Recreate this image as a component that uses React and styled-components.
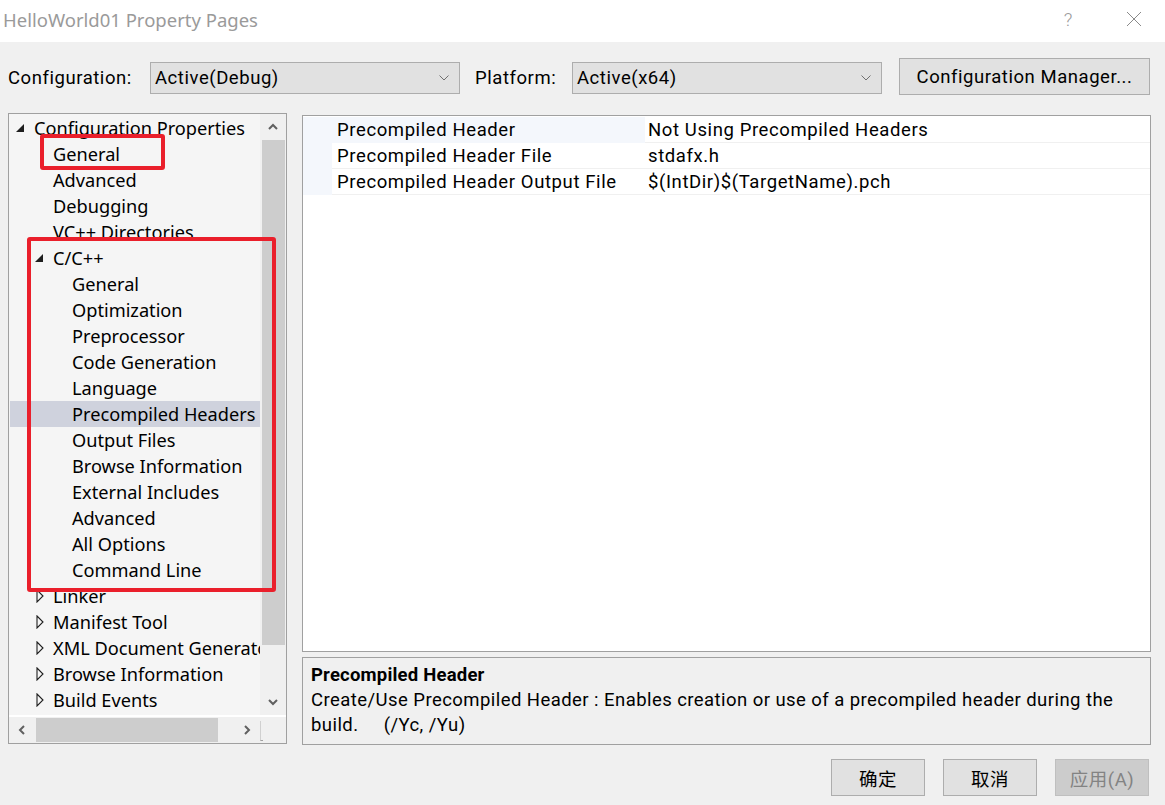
import React from "react";
import styled, { createGlobalStyle } from "styled-components";

const Global = createGlobalStyle`
  html, body { margin: 0; padding: 0; background: #f0f0f0; }
  body { font-family: "Noto Sans", "Noto Sans CJK SC", sans-serif; color: #000; }
  * { box-sizing: border-box; }
`;

const UI = `"Roboto", "Noto Sans CJK SC", sans-serif`;
const TREE = `"Noto Sans", "Noto Sans CJK SC", sans-serif`;

const Window = styled.div`
  width: 1165px;
  height: 805px;
  display: flex;
  flex-direction: column;
  background: #f0f0f0;
  overflow: hidden;
`;

const TitleBar = styled.div`
  height: 42px;
  background: #fff;
  display: flex;
  align-items: center;
  padding-left: 3px;
  flex-shrink: 0;
`;

const Title = styled.div`
  flex: 1;
  font-family: ${TREE};
  font-size: 18.5px;
  color: #9a9a9a;
  padding-bottom: 4px;
`;

const TitleBtn = styled.div`
  width: ${(p) => p.$w}px;
  height: 42px;
  display: flex;
  align-items: center;
  justify-content: center;
  color: #9a9a9a;
  font-family: ${UI};
  font-size: 19px;
  font-weight: 300;
  padding-bottom: 4px;
`;

const Toolbar = styled.div`
  height: 71px;
  display: flex;
  align-items: center;
  padding: 0 15px 0 8px;
  flex-shrink: 0;
`;

const Label = styled.span`
  font-family: ${UI};
  font-size: 18.5px;
  letter-spacing: 0.55px;
  width: ${(p) => p.$w}px;
  flex-shrink: 0;
`;

const Combo = styled.div`
  width: 310px;
  height: 32px;
  background: #e1e1e1;
  border: 1px solid #adadad;
  display: flex;
  align-items: center;
  padding-left: 4px;
  font-family: ${UI};
  font-size: 18.5px;
  letter-spacing: 0.55px;
  margin-right: ${(p) => p.$mr}px;
  flex-shrink: 0;
`;

const ComboText = styled.span`
  flex: 1;
`;

const ComboArrow = styled.span`
  width: 24px;
  display: flex;
  justify-content: center;
  padding-right: 6px;
`;

const Button = styled.button`
  width: ${(p) => p.$w}px;
  height: ${(p) => p.$h}px;
  background: ${(p) => (p.disabled ? "#cccccc" : "#e1e1e1")};
  border: 1px solid ${(p) => (p.disabled ? "#bfbfbf" : "#adadad")};
  color: ${(p) => (p.disabled ? "#838383" : "#000")};
  font-family: ${UI};
  font-size: 18.5px;
  letter-spacing: 0.55px;
  padding: 0;
  margin: 0;
  flex-shrink: 0;
  display: flex;
  align-items: center;
  justify-content: center;
  margin-top: ${(p) => p.$mt || 0}px;
`;

const Main = styled.div`
  height: 632px;
  display: flex;
  padding-left: 8px;
  gap: 15px;
  flex-shrink: 0;
`;

const TreePanel = styled.div`
  position: relative;
  width: 279px;
  height: 631px;
  border: 1px solid #a0a0a0;
  background: #f5f5f5;
  display: grid;
  grid-template-columns: 251px 26px;
  grid-template-rows: 601px 28px;
`;

const TreeContent = styled.div`
  overflow: hidden;
  padding-top: 1px;
  padding-left: 1px;
`;

const TreeRow = styled.div`
  height: 26px;
  display: flex;
  align-items: center;
  white-space: nowrap;
  font-family: ${TREE};
  font-size: 18.2px;
  padding-left: ${(p) => 5 + p.$level * 19}px;
  background: ${(p) => (p.$selected ? "#cfd2dd" : "transparent")};
`;

const Toggle = styled.span`
  width: 19px;
  flex-shrink: 0;
  display: flex;
  align-items: center;
  justify-content: flex-start;
  padding-left: ${(p) => (p.$open ? 0 : 2)}px;
`;

const VScroll = styled.div`
  background: #f0f0f0;
  display: flex;
  flex-direction: column;
`;

const ScrollBtn = styled.div`
  height: ${(p) => p.$h}px;
  width: ${(p) => p.$w || 26}px;
  display: flex;
  align-items: center;
  justify-content: center;
  flex-shrink: 0;
`;

const VThumb = styled.div`
  margin: 0 1px 0 2px;
  height: 505px;
  background: #cdcdcd;
`;

const VSpacer = styled.div`
  flex: 1;
`;

const HScroll = styled.div`
  background: #f0f0f0;
  display: flex;
  align-items: stretch;
  border-top: 2px solid #fff;
`;

const HThumb = styled.div`
  width: 182px;
  margin: 1px 0 1px 1px;
  background: #cdcdcd;
`;

const Corner = styled.div`
  background: #f0f0f0;
  border-top: 2px solid #fff;
  position: relative;
`;

const Grip = styled.div`
  position: absolute;
  left: 0;
  top: 4px;
  width: 3px;
  height: 20px;
  border-left: 1px solid #d0d0d0;
  border-bottom: 1px solid #a0a0a0;
`;

const Highlight = styled.div`
  position: absolute;
  left: ${(p) => p.$x}px;
  top: ${(p) => p.$y}px;
  width: ${(p) => p.$w}px;
  height: ${(p) => p.$h}px;
  border: 4px solid #ea1f2b;
  border-radius: 3px;
  pointer-events: none;
`;

const RightCol = styled.div`
  width: 849px;
  display: flex;
  flex-direction: column;
  gap: 5px;
  padding-top: 2px;
`;

const Grid = styled.div`
  height: 537px;
  border: 1px solid #a0a0a0;
  background: #fff;
  padding-top: 1px;
  display: flex;
  flex-direction: column;
`;

const GridRow = styled.div`
  height: 26px;
  display: grid;
  grid-template-columns: 29px 313px 1fr;
  font-family: ${UI};
  font-size: 18.5px;
  letter-spacing: 0.6px;
`;

const Margin = styled.div`
  background: #f4f7fc;
`;

const Cell = styled.div`
  display: flex;
  align-items: center;
  padding-left: ${(p) => p.$pl}px;
  padding-top: 1px;
  background: ${(p) => (p.$sel ? "#f4f7fc" : "#fff")};
  border-bottom: 1px solid ${(p) => (p.$sel ? "#f4f7fc" : "#f0f0f0")};
  white-space: nowrap;
`;

const Desc = styled.div`
  height: 88px;
  border: 1px solid #a0a0a0;
  background: #f0f0f0;
  padding: 4px 8px;
  font-family: ${UI};
  font-size: 18.5px;
  letter-spacing: 0.44px;
  line-height: 24.5px;
  white-space: pre-wrap;
`;

const DescTitle = styled.div`
  font-weight: 700;
  letter-spacing: 0.2px;
  line-height: 26px;
`;

const Footer = styled.div`
  flex: 1;
  display: flex;
  justify-content: flex-end;
  align-items: flex-start;
  padding: 14px 16px 0 0;
  gap: 18px;
`;

const Chevron = ({ dir = "down", size = 12, color = "#606060", w = 2 }) => {
  const d = {
    down: "M2 4 L6 8 L10 4",
    up: "M2 8 L6 4 L10 8",
    left: "M8 2 L4 6 L8 10",
    right: "M4 2 L8 6 L4 10",
  }[dir];
  return (
    <svg width={size} height={size} viewBox="0 0 12 12">
      <path d={d} fill="none" stroke={color} strokeWidth={w} />
    </svg>
  );
};

const ComboChevron = () => (
  <svg width="10" height="6" viewBox="0 0 10 6">
    <path d="M0.5 0.5 L5 5 L9.5 0.5" fill="none" stroke="#707070" strokeWidth="1" />
  </svg>
);

const OpenTri = () => (
  <svg width="10" height="10" viewBox="0 0 10 10">
    <path d="M9 1 L9 9 L1 9 Z" fill="#1e1e1e" />
  </svg>
);

const ClosedTri = () => (
  <svg width="8" height="14" viewBox="0 0 8 14">
    <path d="M1 1 L7 7 L1 13 Z" fill="none" stroke="#1e1e1e" strokeWidth="1.1" />
  </svg>
);

const tree = [
  { t: "Configuration Properties", l: 0, open: true },
  { t: "General", l: 1 },
  { t: "Advanced", l: 1 },
  { t: "Debugging", l: 1 },
  { t: "VC++ Directories", l: 1 },
  { t: "C/C++", l: 1, open: true },
  { t: "General", l: 2 },
  { t: "Optimization", l: 2 },
  { t: "Preprocessor", l: 2 },
  { t: "Code Generation", l: 2 },
  { t: "Language", l: 2 },
  { t: "Precompiled Headers", l: 2, sel: true },
  { t: "Output Files", l: 2 },
  { t: "Browse Information", l: 2 },
  { t: "External Includes", l: 2 },
  { t: "Advanced", l: 2 },
  { t: "All Options", l: 2 },
  { t: "Command Line", l: 2 },
  { t: "Linker", l: 1, closed: true },
  { t: "Manifest Tool", l: 1, closed: true },
  { t: "XML Document Generator", l: 1, closed: true },
  { t: "Browse Information", l: 1, closed: true },
  { t: "Build Events", l: 1, closed: true },
];

const props = [
  ["Precompiled Header", "Not Using Precompiled Headers"],
  ["Precompiled Header File", "stdafx.h"],
  ["Precompiled Header Output File", "$(IntDir)$(TargetName).pch"],
];

export default function App() {
  return (
    <Window>
      <Global />
      <TitleBar>
        <Title>HelloWorld01 Property Pages</Title>
        <TitleBtn $w={70}>?</TitleBtn>
        <TitleBtn $w={62}>
          <svg width="16" height="16" viewBox="0 0 16 16">
            <path d="M1 1 L15 15 M15 1 L1 15" stroke="#8a8a8a" strokeWidth="1" />
          </svg>
        </TitleBtn>
      </TitleBar>
      <Toolbar>
        <Label $w={142}>Configuration:</Label>
        <Combo $mr={15}>
          <ComboText>Active(Debug)</ComboText>
          <ComboArrow><ComboChevron /></ComboArrow>
        </Combo>
        <Label $w={97}>Platform:</Label>
        <Combo $mr={17}>
          <ComboText>Active(x64)</ComboText>
          <ComboArrow><ComboChevron /></ComboArrow>
        </Combo>
        <Button $w={251} $h={37} $mt={-2}>Configuration Manager...</Button>
      </Toolbar>
      <Main>
        <TreePanel>
          <TreeContent>
            {tree.map((n, i) => (
              <TreeRow key={i} $level={n.l} $selected={n.sel}>
                <Toggle $open={n.open}>
                  {n.open ? <OpenTri /> : n.closed ? <ClosedTri /> : null}
                </Toggle>
                {n.t}
              </TreeRow>
            ))}
          </TreeContent>
          <VScroll>
            <ScrollBtn $h={26}><Chevron dir="up" /></ScrollBtn>
            <VThumb />
            <VSpacer />
            <ScrollBtn $h={26}><Chevron dir="down" /></ScrollBtn>
          </VScroll>
          <HScroll>
            <ScrollBtn $h={26} $w={26}><Chevron dir="left" /></ScrollBtn>
            <HThumb />
            <VSpacer />
            <ScrollBtn $h={26} $w={26}><Chevron dir="right" /></ScrollBtn>
          </HScroll>
          <Corner><Grip /></Corner>
          <Highlight $x={31} $y={20} $w={125} $h={36} />
          <Highlight $x={18} $y={123} $w={249} $h={355} />
        </TreePanel>
        <RightCol>
          <Grid>
            {props.map(([k, v], i) => (
              <GridRow key={i}>
                <Margin />
                <Cell $pl={5} $sel={i === 0}>{k}</Cell>
                <Cell $pl={3}>{v}</Cell>
              </GridRow>
            ))}
          </Grid>
          <Desc>
            <DescTitle>Precompiled Header</DescTitle>
            {"Create/Use Precompiled Header : Enables creation or use of a precompiled header during the build.     (/Yc, /Yu)"}
          </Desc>
        </RightCol>
      </Main>
      <Footer>
        <Button $w={94} $h={37}>确定</Button>
        <Button $w={94} $h={37}>取消</Button>
        <Button $w={94} $h={37} disabled>应用(A)</Button>
      </Footer>
    </Window>
  );
}
